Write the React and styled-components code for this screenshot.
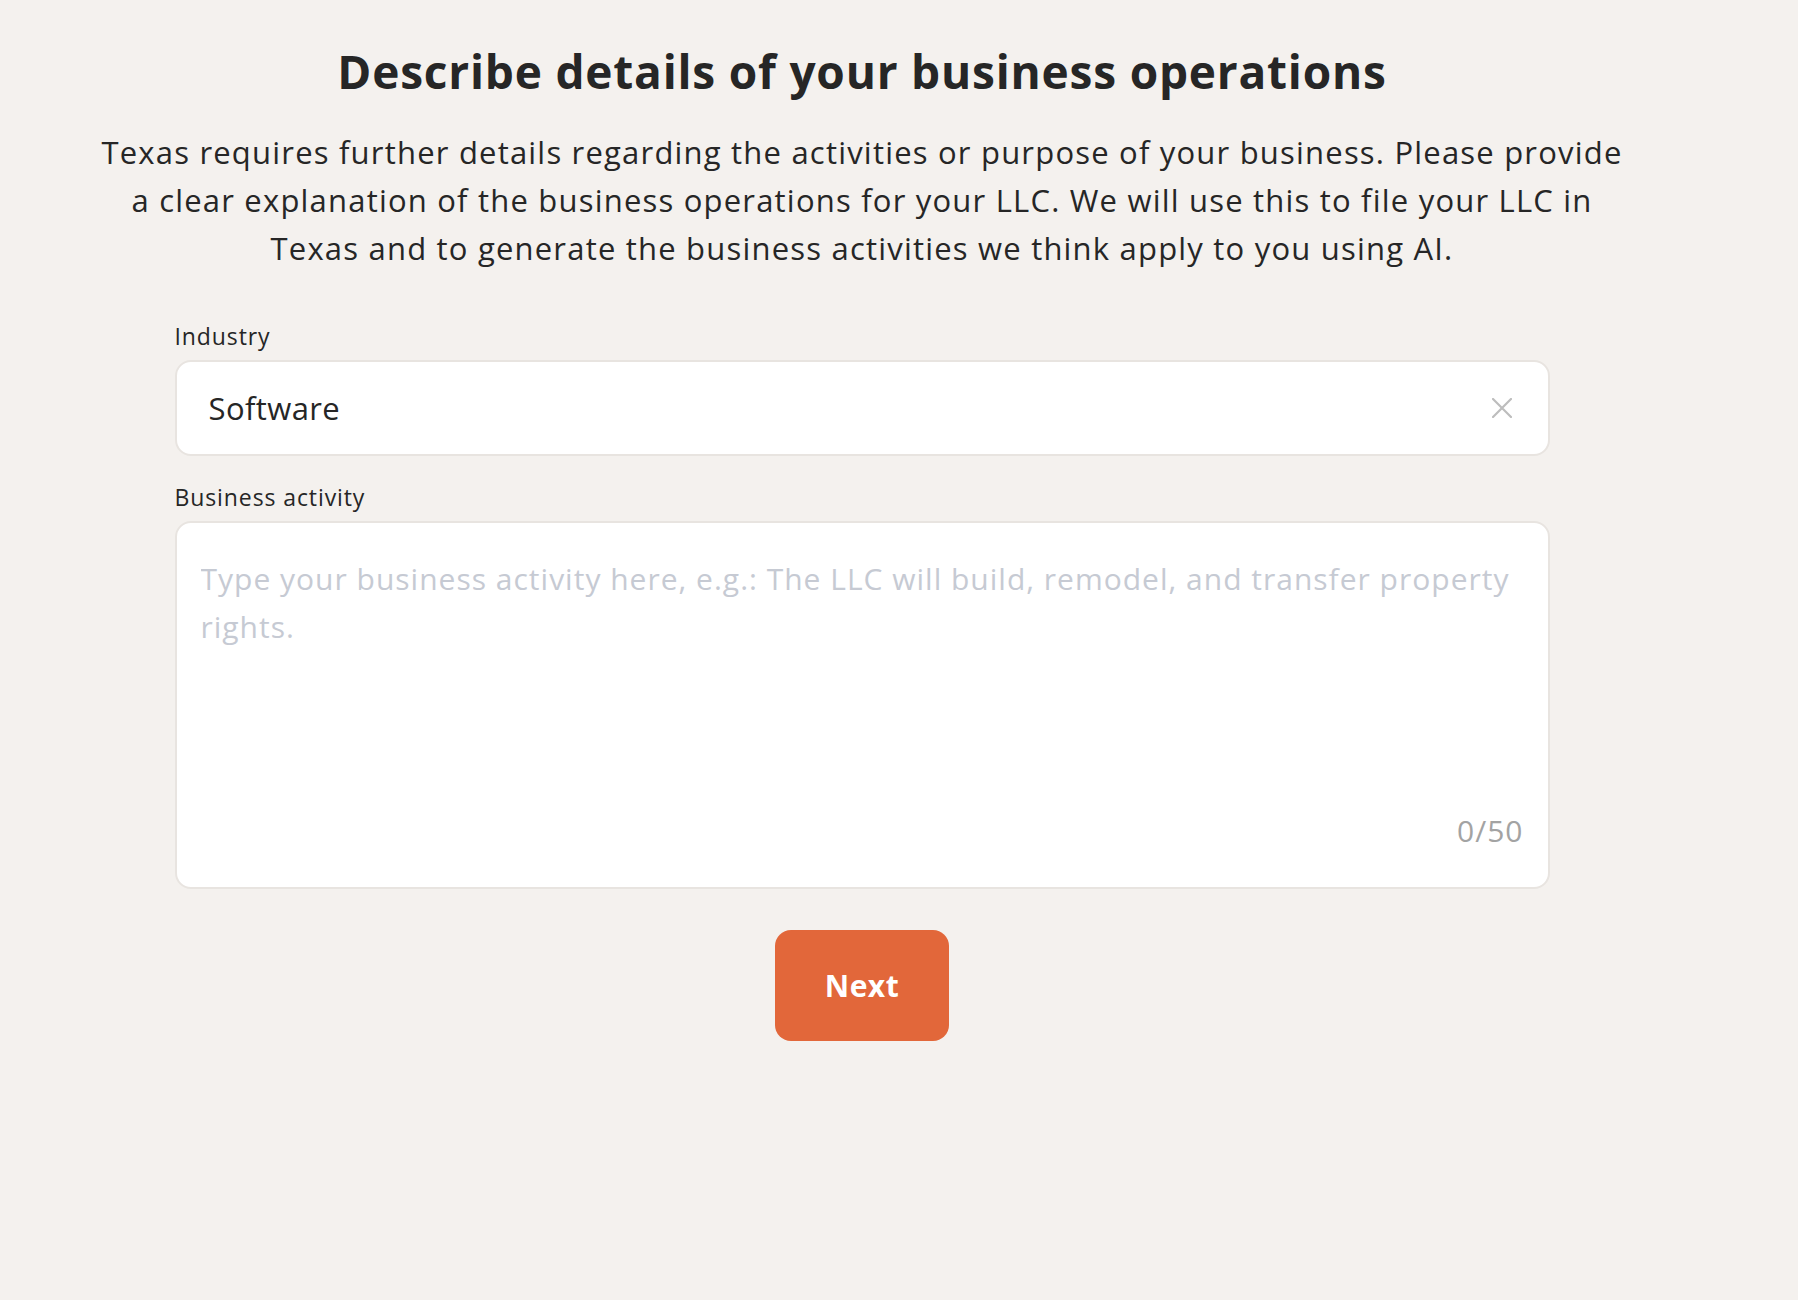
import React from "react";
import styled, { createGlobalStyle } from "styled-components";

const GlobalStyle = createGlobalStyle`
  html, body {
    margin: 0;
    padding: 0;
    background: #f4f1ee;
  }
  body {
    font-family: "Open Sans", "Noto Sans", Arial, sans-serif;
    color: #262626;
  }
  * { box-sizing: border-box; }
`;

const Page = styled.main`
  width: 1724px;
  min-height: 1300px;
  display: flex;
  flex-direction: column;
  align-items: center;
  padding-top: 39px;
`;

const Title = styled.h1`
  margin: 0;
  font-size: 46px;
  line-height: 64px;
  font-weight: 700;
  color: #262626;
  letter-spacing: 0.8px;
  text-align: center;
`;

const Intro = styled.p`
  margin: 25px 0 0;
  font-size: 31px;
  line-height: 48px;
  font-weight: 400;
  text-align: center;
  letter-spacing: 1.2px;
  color: #262626;
`;

const Form = styled.form`
  width: 1375px;
  margin-top: 48px;
  display: flex;
  flex-direction: column;
`;

const Field = styled.div`
  display: flex;
  flex-direction: column;
  gap: 8px;
  margin-bottom: ${(p) => p.$mb || 0}px;
`;

const Label = styled.label`
  font-size: 23px;
  line-height: 32px;
  color: #262626;
  letter-spacing: 0.9px;
`;

const InputBox = styled.div`
  height: 96px;
  background: #ffffff;
  border: 2px solid #e8e4e0;
  border-radius: 16px;
  display: flex;
  align-items: center;
  padding: 0 34px 0 32px;
`;

const InputText = styled.span`
  flex: 1;
  font-size: 31px;
  color: #262626;
  letter-spacing: 0.4px;
`;

const ClearButton = styled.button`
  border: none;
  background: none;
  padding: 0;
  width: 24px;
  height: 24px;
  display: flex;
  align-items: center;
  justify-content: center;
  cursor: pointer;
`;

const TextAreaBox = styled.div`
  position: relative;
  height: 368px;
  background: #ffffff;
  border: 2px solid #e8e4e0;
  border-radius: 16px;
  padding: 32px 24px 0 24px;
`;

const TextArea = styled.textarea`
  width: 100%;
  height: 250px;
  border: none;
  outline: none;
  resize: none;
  background: transparent;
  font-family: "Open Sans", "Noto Sans", Arial, sans-serif;
  font-size: 30px;
  line-height: 48px;
  letter-spacing: 1px;
  color: #262626;
  padding: 0;
  &::placeholder {
    color: #c6cad3;
  }
`;

const Counter = styled.span`
  position: absolute;
  right: 24px;
  bottom: 36px;
  font-size: 30px;
  line-height: 40px;
  letter-spacing: 1px;
  color: #a3a3a3;
`;

const NextButton = styled.button`
  align-self: center;
  margin-top: 41px;
  width: 174px;
  height: 111px;
  border: none;
  border-radius: 16px;
  background: #e2673a;
  color: #ffffff;
  font-family: "Open Sans", "Noto Sans", Arial, sans-serif;
  font-size: 30px;
  font-weight: 700;
  letter-spacing: 0.5px;
  cursor: pointer;
`;

export default function App() {
  return (
    <>
      <GlobalStyle />
      <Page>
        <Title>Describe details of your business operations</Title>
        <Intro>
          Texas requires further details regarding the activities or purpose of your business. Please provide
          <br />
          a clear explanation of the business operations for your LLC. We will use this to file your LLC in
          <br />
          Texas and to generate the business activities we think apply to you using AI.
        </Intro>
        <Form onSubmit={(e) => e.preventDefault()}>
          <Field $mb={25}>
            <Label>Industry</Label>
            <InputBox>
              <InputText>Software</InputText>
              <ClearButton type="button" aria-label="Clear">
                <svg width="20" height="20" viewBox="0 0 20 20" fill="none">
                  <path d="M1 1L19 19M19 1L1 19" stroke="#bdbdbd" strokeWidth="2.2" strokeLinecap="square" />
                </svg>
              </ClearButton>
            </InputBox>
          </Field>
          <Field>
            <Label>Business activity</Label>
            <TextAreaBox>
              <TextArea placeholder="Type your business activity here, e.g.: The LLC will build, remodel, and transfer property rights." />
              <Counter>0/50</Counter>
            </TextAreaBox>
          </Field>
          <NextButton type="submit">Next</NextButton>
        </Form>
      </Page>
    </>
  );
}
